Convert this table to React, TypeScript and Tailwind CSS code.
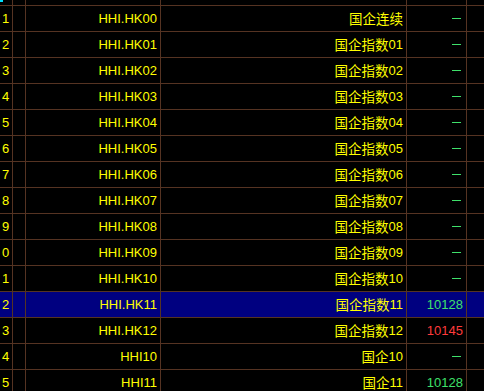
import React from "react";

type Row = { n: string; code: string; name: string; num: string; price?: string; color?: "g" | "r"; hl?: boolean };

const rows: Row[] = [
  { n: "1", code: "HHI.HK00", name: "国企连续", num: "" },
  { n: "2", code: "HHI.HK01", name: "国企指数", num: "01" },
  { n: "3", code: "HHI.HK02", name: "国企指数", num: "02" },
  { n: "4", code: "HHI.HK03", name: "国企指数", num: "03" },
  { n: "5", code: "HHI.HK04", name: "国企指数", num: "04" },
  { n: "6", code: "HHI.HK05", name: "国企指数", num: "05" },
  { n: "7", code: "HHI.HK06", name: "国企指数", num: "06" },
  { n: "8", code: "HHI.HK07", name: "国企指数", num: "07" },
  { n: "9", code: "HHI.HK08", name: "国企指数", num: "08" },
  { n: "0", code: "HHI.HK09", name: "国企指数", num: "09" },
  { n: "1", code: "HHI.HK10", name: "国企指数", num: "10" },
  { n: "2", code: "HHI.HK11", name: "国企指数", num: "11", price: "10128", color: "g", hl: true },
  { n: "3", code: "HHI.HK12", name: "国企指数", num: "12", price: "10145", color: "r" },
  { n: "4", code: "HHI10", name: "国企", num: "10" },
  { n: "5", code: "HHI11", name: "国企", num: "11", price: "10128", color: "g" },
];

const font = { fontFamily: '"Liberation Sans", Arial, "Noto Sans CJK SC", sans-serif' };

export default function App() {
  return (
    <div className="w-[484px] h-[391px] overflow-hidden bg-black text-[13px] text-[#ffff00]" style={font}>
      <div className="flex h-[6px] border-b border-[#553322]">
        <div className="w-[13px] shrink-0 border-r border-[#553322] relative">
          <div className="absolute left-0 top-0 w-[3px] h-[2px] bg-[#00e0ff]" />
        </div>
        <div className="w-[13px] shrink-0 border-r border-[#553322]" />
        <div className="w-[135px] shrink-0 border-r border-[#553322]" />
        <div className="w-[246px] shrink-0 border-r border-[#553322]" />
        <div className="w-[60px] shrink-0 border-r border-[#553322]" />
        <div className="flex-1" />
      </div>
      {rows.map((r, i) => (
        <div key={i} className={`flex h-[26px] border-b border-[#553322] ${r.hl ? "bg-[#000080]" : ""}`}>
          <div className="w-[13px] shrink-0 border-r border-[#553322] flex items-center pl-[2px] leading-none">{r.n}</div>
          <div className="w-[13px] shrink-0 border-r border-[#553322]" />
          <div className="w-[135px] shrink-0 border-r border-[#553322] flex items-center justify-end pr-[3px] leading-none whitespace-nowrap">{r.code}</div>
          <div className="w-[246px] shrink-0 border-r border-[#553322] flex items-center justify-end pr-[3px] leading-none whitespace-nowrap">
            <span className="text-[13.5px]" style={{ fontFamily: '"Noto Sans CJK SC", sans-serif' }}>{r.name}</span>
            {r.num && <span>{r.num}</span>}
            {!r.num && r.name === "国企连续" && <span className="text-[13.5px]" style={{ fontFamily: '"Noto Sans CJK SC", sans-serif' }}>{""}</span>}
          </div>
          <div className="w-[60px] shrink-0 border-r border-[#553322] flex items-center justify-end leading-none whitespace-nowrap">
            {r.price ? (
              <span className={`pr-[3px] ${r.color === "g" ? "text-[#3ee06a]" : "text-[#ff3b3b]"}`}>{r.price}</span>
            ) : (
              <span className="mr-[5px] w-[9px] h-[1px] bg-[#3ee06a]" />
            )}
          </div>
          <div className="flex-1" />
        </div>
      ))}
    </div>
  );
}
